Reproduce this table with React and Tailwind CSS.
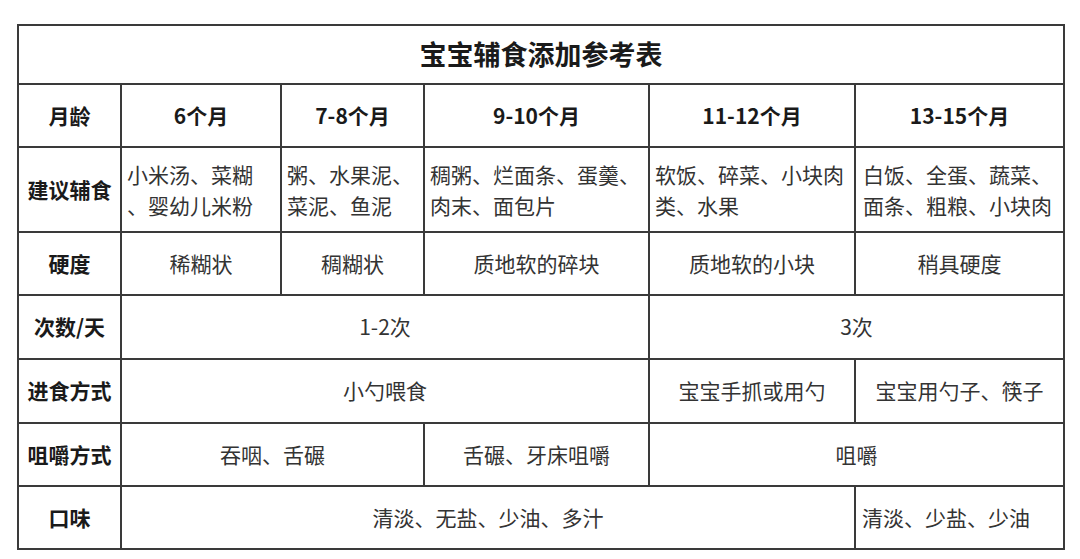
import React from "react";

const font = { fontFamily: '"Noto Sans CJK SC", "Noto Sans", sans-serif' };

function H({ children, className = "" }) {
  return (
    <div className={`bg-white flex items-center justify-center text-[21px] font-bold text-[#1a1a1a] whitespace-nowrap ${className}`}>
      {children}
    </div>
  );
}

function C({ children, className = "" }) {
  return (
    <div className={`bg-white flex items-center justify-center text-[21px] text-[#333333] whitespace-nowrap ${className}`}>
      {children}
    </div>
  );
}

function L({ lines, className = "" }) {
  return (
    <div className={`bg-white flex flex-col justify-center pl-[5px] text-[21px] leading-[31px] text-[#333333] ${className}`}>
      {lines.map((l, i) => (
        <span key={i} className="whitespace-nowrap">{l}</span>
      ))}
    </div>
  );
}

export default function App() {
  return (
    <div className="w-[1080px] h-[559px] bg-white overflow-hidden" style={font}>
      <div className="pt-[24px] pl-[17px]">
        <div
          className="grid w-[1048px] h-[526px] bg-[#3a3a3a] p-[2px] gap-[2px] grid-cols-[101px_158px_141px_223px_204px_207px] grid-rows-[57px_61px_83px_61px_62px_62px_61px_61px]"
        >
          <div className="col-span-6 bg-white flex items-center justify-center text-[27px] font-bold text-[#1a1a1a]">
            宝宝辅食添加参考表
          </div>

          <H>月龄</H>
          <H>6个月</H>
          <H>7-8个月</H>
          <H>9-10个月</H>
          <H>11-12个月</H>
          <H>13-15个月</H>

          <H>建议辅食</H>
          <L lines={["小米汤、菜糊", "、婴幼儿米粉"]} />
          <L lines={["粥、水果泥、", "菜泥、鱼泥"]} />
          <L lines={["稠粥、烂面条、蛋羹、", "肉末、面包片"]} />
          <L lines={["软饭、碎菜、小块肉", "类、水果"]} />
          <L lines={["白饭、全蛋、蔬菜、", "面条、粗粮、小块肉"]} className="pl-[7px]" />

          <H>硬度</H>
          <C>稀糊状</C>
          <C>稠糊状</C>
          <C>质地软的碎块</C>
          <C>质地软的小块</C>
          <C>稍具硬度</C>

          <H>次数/天</H>
          <C className="col-span-3">1-2次</C>
          <C className="col-span-2">3次</C>

          <H>进食方式</H>
          <C className="col-span-3">小勺喂食</C>
          <C>宝宝手抓或用勺</C>
          <C>宝宝用勺子、筷子</C>

          <H>咀嚼方式</H>
          <C className="col-span-2">吞咽、舌碾</C>
          <C>舌碾、牙床咀嚼</C>
          <C className="col-span-2">咀嚼</C>

          <H>口味</H>
          <C className="col-span-4">清淡、无盐、少油、多汁</C>
          <C className="justify-start pl-[6px]">清淡、少盐、少油</C>
        </div>
      </div>
    </div>
  );
}
